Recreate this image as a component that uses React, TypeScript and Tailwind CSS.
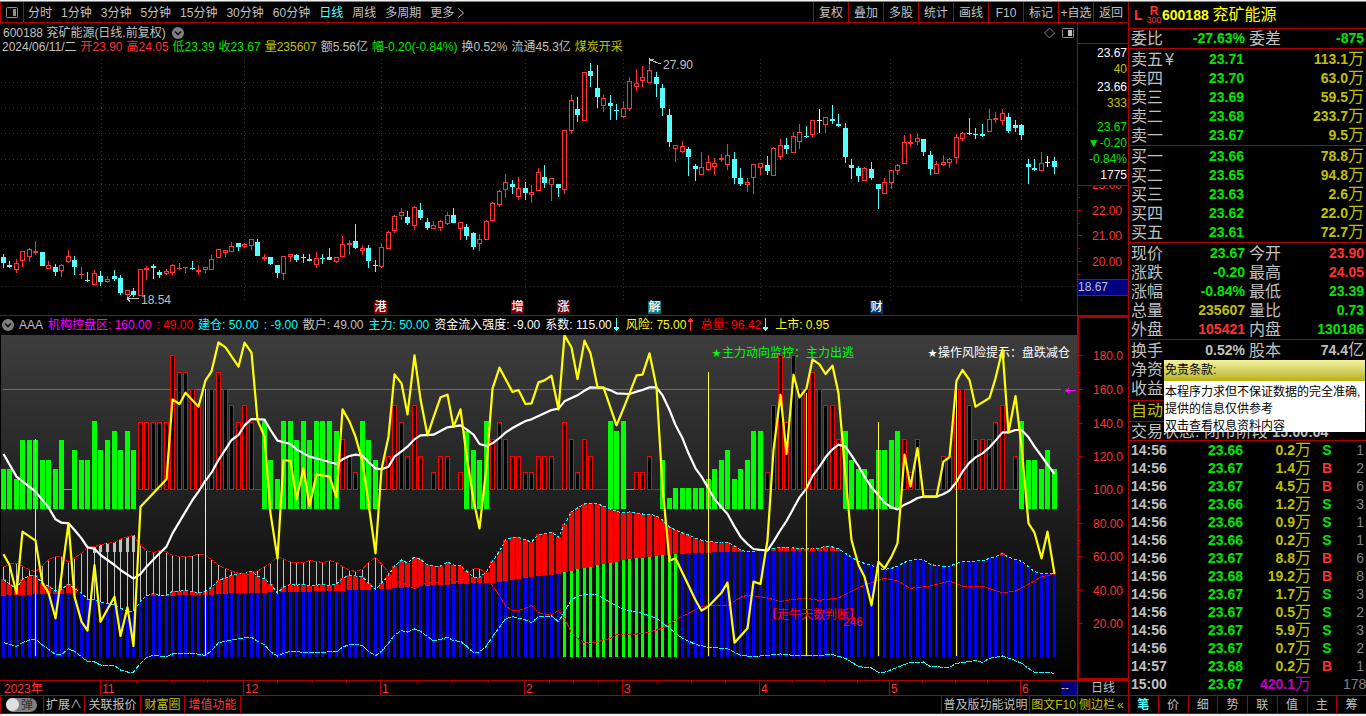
import type { ReactNode } from 'react';

type Kind = 'c' | 'r' | 'w';
type Candle = [Kind, number, number, number, number];

// kind, high, low, body top, body bottom
const CANDLES: Candle[] = [
  ['c', 254, 268, 257, 263], ['c', 261, 268, 265, 267], ['r', 259, 273, 263, 270], ['r', 251, 267, 251, 261],
  ['r', 248, 262, 249, 257], ['r', 241, 255, 251, 253], ['c', 252, 266, 252, 266], ['r', 261, 269, 265, 269],
  ['c', 264, 276, 267, 272], ['r', 264, 277, 265, 271], ['r', 250, 263, 256, 262], ['c', 256, 275, 260, 267],
  ['r', 267, 279, 274, 275], ['c', 272, 282, 280, 281], ['r', 270, 285, 273, 285], ['c', 271, 286, 276, 282],
  ['r', 276, 283, 279, 282], ['c', 270, 281, 276, 279], ['c', 275, 295, 278, 293], ['r', 290, 297, 290, 295],
  ['c', 288, 297, 291, 295], ['r', 269, 296, 269, 296], ['r', 266, 280, 268, 270], ['c', 264, 279, 266, 268],
  ['c', 270, 278, 272, 275], ['r', 269, 275, 271, 274], ['r', 264, 275, 265, 273], ['r', 263, 270, 268, 269],
  ['r', 267, 273, 267, 268], ['c', 261, 270, 268, 269], ['r', 265, 275, 270, 272], ['r', 267, 273, 267, 270],
  ['r', 255, 270, 259, 270], ['r', 249, 258, 249, 258], ['r', 250, 257, 250, 253], ['r', 242, 252, 246, 252],
  ['c', 243, 251, 243, 247], ['r', 243, 248, 244, 247], ['r', 239, 250, 239, 246], ['c', 239, 256, 242, 256],
  ['r', 254, 261, 257, 259], ['c', 257, 265, 257, 264], ['c', 265, 278, 265, 273], ['r', 256, 280, 256, 274],
  ['r', 254, 262, 254, 257], ['c', 254, 262, 255, 260], ['c', 254, 263, 257, 258], ['c', 254, 261, 259, 261],
  ['r', 252, 268, 258, 265], ['c', 254, 264, 258, 259], ['c', 248, 260, 257, 260], ['r', 257, 263, 257, 262],
  ['r', 236, 257, 244, 257], ['r', 240, 255, 243, 245], ['c', 224, 249, 241, 248], ['r', 245, 255, 248, 251],
  ['c', 245, 268, 248, 261], ['c', 260, 272, 265, 266], ['r', 243, 268, 247, 267], ['r', 231, 249, 232, 249],
  ['r', 215, 233, 216, 231], ['r', 208, 220, 212, 216], ['c', 211, 225, 217, 223], ['r', 206, 230, 207, 226],
  ['c', 203, 220, 210, 218], ['c', 218, 230, 222, 228], ['r', 221, 229, 225, 229], ['r', 220, 231, 221, 228],
  ['r', 212, 225, 215, 224], ['c', 208, 223, 215, 223], ['r', 222, 240, 222, 229], ['c', 224, 240, 227, 236],
  ['c', 232, 250, 233, 247], ['r', 234, 251, 239, 244], ['r', 220, 240, 221, 240], ['r', 202, 221, 203, 221],
  ['r', 190, 207, 191, 205], ['r', 174, 198, 182, 190], ['c', 180, 194, 184, 187], ['r', 177, 200, 188, 197],
  ['c', 182, 200, 188, 193], ['r', 185, 203, 192, 195], ['r', 168, 191, 172, 191], ['c', 165, 188, 177, 183],
  ['r', 178, 201, 178, 185], ['c', 184, 197, 184, 188], ['r', 130, 194, 130, 190], ['r', 95, 134, 100, 131],
  ['c', 97, 122, 109, 115], ['r', 72, 121, 72, 121], ['c', 63, 87, 71, 76], ['c', 65, 108, 88, 97],
  ['r', 95, 112, 98, 106], ['c', 95, 120, 103, 106], ['c', 104, 120, 110, 111], ['r', 101, 118, 108, 117],
  ['r', 77, 111, 81, 109], ['r', 69, 91, 83, 87], ['r', 66, 87, 77, 81], ['r', 62, 83, 70, 83],
  ['c', 72, 97, 77, 84], ['c', 84, 116, 88, 108], ['c', 109, 147, 115, 142], ['r', 145, 162, 145, 149],
  ['r', 141, 153, 146, 152], ['c', 147, 176, 149, 157], ['c', 164, 181, 166, 169], ['r', 152, 175, 167, 175],
  ['r', 155, 171, 162, 170], ['r', 158, 175, 163, 167], ['r', 154, 162, 158, 160], ['r', 144, 170, 155, 165],
  ['c', 152, 184, 159, 178], ['c', 168, 186, 178, 184], ['r', 178, 192, 182, 185], ['r', 164, 194, 164, 178],
  ['r', 163, 175, 163, 168], ['c', 156, 175, 165, 171], ['r', 147, 176, 148, 176], ['r', 139, 160, 145, 157],
  ['c', 138, 154, 145, 149], ['r', 132, 153, 136, 153], ['r', 124, 149, 132, 142], ['c', 126, 138, 136, 137],
  ['r', 120, 138, 120, 135], ['w', 109, 133, 120, 121], ['r', 117, 133, 117, 125], ['c', 105, 124, 119, 121],
  ['c', 114, 127, 124, 126], ['c', 123, 163, 128, 157], ['c', 159, 179, 165, 168], ['c', 166, 182, 168, 176],
  ['r', 167, 181, 168, 181], ['c', 162, 180, 169, 178], ['c', 184, 209, 184, 189], ['r', 178, 194, 182, 194],
  ['r', 170, 189, 170, 183], ['r', 164, 175, 165, 171], ['r', 135, 164, 142, 164], ['r', 134, 147, 142, 144],
  ['r', 133, 145, 138, 142], ['c', 139, 156, 139, 152], ['c', 151, 175, 155, 169], ['r', 161, 174, 164, 174],
  ['r', 155, 166, 162, 165], ['r', 158, 168, 159, 163], ['r', 134, 164, 137, 158], ['r', 132, 141, 133, 139],
  ['c', 118, 135, 133, 134], ['c', 128, 139, 134, 135], ['c', 124, 137, 134, 136], ['r', 109, 132, 119, 132],
  ['r', 112, 123, 118, 120], ['r', 109, 125, 113, 121], ['c', 113, 133, 117, 131], ['c', 120, 132, 125, 128],
  ['c', 124, 140, 125, 135], ['c', 159, 184, 164, 167], ['c', 159, 171, 168, 170], ['r', 152, 171, 163, 171],
  ['w', 156, 167, 162, 163], ['c', 157, 174, 161, 167],
];

// One letter per day: capitals are green bars, small letters hollow red ones
const BARS =
  'FFGCCCEEFC,DEEADCBDBD' + 'eeeeeabbcdccbcdede.' + 'AEGAACACAAAB' + 'fghACE,' + 'gdegdg.hgg.h' +
  'BDEAfefgghhggg.efhfg..' + 'ABA,hhg.EIHHHHH' + 'GFEDGFEBB' + 'hdaeaccbcddf' + 'BEFFGDDCB' + 'fhf...ggccdfffed.gAEEFDF';

const BAR_TOP: Record<string, number> = {
  A: 86, B: 96, C: 105, D: 115, E: 125, F: 134, G: 144, H: 153, I: 163,
  a: 20, b: 37, c: 54, d: 70, e: 87, f: 104, g: 121, h: 137,
};

// Series are "day:value" pairs, value in thirds of a pixel below the panel top; gaps are linear
const CONTROL = '0:857 6:852 12:849 22:857 30:856 35:850 42:847 51:843 54:840 59:837 63:830 65:827 70:822 75:818 80:804 85:791 90:770 95:751 100:737 104:731 107:729 110:726 116:724 128:722 153:738 161:760';
const TREND = '0:808 1:823 2:835 3:808 4:798 5:796 6:820 7:828 8:843 9:838 10:822 11:835 12:849 13:868 14:868 15:876 16:880 17:884 18:894 19:904 20:904 21:873 22:858 23:850 24:857 25:856 26:844 27:844 28:841 29:844 30:849 31:844 32:832 33:811 34:804 35:796 36:792 37:790 38:784 39:798 40:807 41:822 42:849 43:832 44:823 45:826 46:822 47:828 48:826 49:823 50:826 51:822 52:805 53:796 54:798 55:801 56:820 57:839 58:820 59:796 60:768 61:750 62:759 63:742 64:748 65:765 66:768 67:768 68:756 69:765 70:768 71:783 72:802 73:802 74:786 75:754 76:724 77:690 78:682 79:682 80:690 81:696 82:673 83:672 84:666 85:682 86:642 87:606 88:594 89:582 90:580 91:582 92:588 93:597 94:604 95:609 96:606 97:609 98:612 99:612 100:618 101:630 102:651 103:660 104:669 105:675 106:684 107:691 108:694 109:697 110:696 111:696 112:708 113:720 114:726 115:724 116:721 117:722 118:715 119:711 120:711 121:714 122:714 123:717 124:714 125:714 126:709 127:711 128:717 129:730 130:742 131:754 132:760 133:766 134:776 135:778 136:775 137:769 138:757 139:751 140:748 141:750 142:763 143:767 144:769 145:769 146:760 147:755 150:752 151:745 152:740 153:730 154:742 155:748 156:754 157:770 158:785 159:790 161:790';
const RETAIL = '0:772 1:762 2:760 3:768 4:780 5:785 6:766 7:750 8:738 9:738 10:756 11:744 12:730 13:712 14:710 15:704 16:700 17:697 18:687 19:681 20:676 21:706 22:722 23:728 24:722 25:726 26:736 27:739 28:739 29:738 30:732 31:735 32:748 33:766 34:775 35:783 36:790 37:790 38:796 39:784 40:770 41:760 42:740 43:747 44:756 45:757 46:757 47:752 48:754 49:758 50:752 51:757 52:770 53:781 54:784 55:778 56:757 57:742 58:762 59:787 60:812 62:825 63:836 64:826 65:816 67:816 68:806 70:818 71:795 72:776 73:776 74:790 75:828 76:856 77:888 78:902 79:902 80:894 81:886 82:908 83:912 84:914 85:902 86:925 87:968 88:985 89:998 90:1000 91:996 92:990 93:985 94:974 95:972 97:972 99:966 101:955 103:930 105:910 107:890 108:887 111:887 113:862 114:855 116:860 117:864 119:874 121:868 123:865 125:871 128:864 130:844 132:825 135:805 137:812 139:835 142:828 145:813 147:828 150:828 152:842 153:848 155:843 157:823 159:800 161:792';
const BUILD = '0:998 2:1009 3:998 4:990 5:987 6:1005 8:1033 9:1034 10:1016 11:1024 12:1040 13:1055 14:1056 15:1065 17:1067 18:1080 19:1086 20:1086 21:1060 22:1042 23:1036 25:1040 26:1032 29:1030 31:1036 32:1022 33:998 35:990 37:984 38:982 39:994 40:1004 41:1025 42:1038 43:1030 44:1024 47:1028 51:1025 52:1012 53:1003 54:1003 55:1007 56:1024 57:1037 58:1024 59:1000 60:975 61:962 62:966 63:957 64:964 65:980 66:992 67:988 68:982 69:992 70:994 71:1008 72:1028 73:1026 74:1008 75:980 76:952 77:926 78:920 80:930 81:938 82:920 83:920 84:918 85:935 86:905 87:868 88:860 89:852 91:855 93:878 95:898 98:910 100:925 102:955 104:985 106:1003 108:1012 111:1016 113:1036 115:1040 119:1032 122:1038 127:1034 129:1045 131:1070 133:1074 134:1087 135:1087 137:1072 139:1057 141:1056 142:1070 145:1072 146:1060 149:1052 150:1057 151:1045 153:1038 155:1052 156:1060 157:1075 158:1087 160:1087 161:1090';
const MEAN = '0:432 2:500 5:545 7:592 8:628 9:638 10:640 11:660 12:685 13:712 14:716 15:735 17:765 18:780 20:806 21:792 22:770 24:730 25:710 26:670 28:605 29:570 30:545 31:512 32:488 33:450 34:418 35:390 36:375 37:346 38:327 40:329 41:360 42:392 44:402 45:418 47:440 49:450 51:462 52:448 53:438 54:434 55:437 56:456 57:475 58:478 59:470 60:440 61:424 62:410 63:388 64:376 66:374 68:352 70:346 71:358 72:374 73:402 74:408 75:400 76:384 77:368 78:354 80:333 81:328 82:318 84:300 85:296 86:274 87:264 88:256 89:242 90:232 92:234 93:241 94:250 96:252 97:245 98:240 99:232 100:232 101:256 102:300 103:345 104:385 105:430 106:475 107:500 108:535 109:568 110:592 111:612 112:650 113:680 114:702 115:717 117:722 118:695 119:660 120:633 121:595 122:562 123:535 124:498 125:470 126:442 127:418 128:404 129:410 130:436 131:468 132:500 133:532 134:556 135:578 136:592 137:598 138:584 139:576 140:564 141:560 143:560 144:552 145:542 146:516 147:485 148:458 149:442 150:430 151:412 152:392 153:367 154:367 155:360 156:360 157:382 158:410 159:438 160:464 161:492';
const RISK = '0:733 1:765 2:850 3:665 5:692 6:820 7:848 8:925 9:795 10:640 11:860 12:935 13:962 14:765 15:935 17:860 18:978 19:892 20:1008 21:590 25:508 26:268 27:282 28:248 30:290 31:211 32:184 33:97 34:112 36:170 37:98 38:128 39:330 40:380 41:610 42:745 43:450 44:453 45:568 46:475 47:588 48:493 50:500 51:562 52:298 53:335 54:380 55:455 56:580 57:730 58:478 59:380 60:193 61:220 62:313 63:136 64:268 65:376 66:322 67:262 68:254 69:350 70:298 71:435 72:570 73:655 74:470 75:236 76:173 78:246 79:240 80:282 81:280 82:217 83:211 84:197 85:298 86:76 87:112 88:207 89:92 90:130 91:231 92:232 94:346 95:295 96:250 97:196 98:194 99:130 100:232 101:530 102:752 103:745 106:870 107:902 108:889 110:848 111:818 112:998 114:955 115:815 116:822 117:690 118:420 119:254 120:432 121:194 122:262 123:235 124:148 125:163 126:192 127:167 128:250 129:500 130:690 131:765 132:800 133:886 134:755 135:775 136:740 137:700 138:434 139:530 140:414 141:560 143:560 144:454 145:442 146:212 147:180 148:210 149:290 151:264 152:205 153:118 154:367 155:258 156:410 157:640 158:668 159:745 160:665 161:792';

const SIGNALS = [[5, 387], [31, 238], [108, 186], [123, 250], [134, 336], [146, 212]];

const DAYS = 162;
const COLORS = { c: '#54ffff', r: '#ff3232', w: '#ffffff' };

const dayX = (i: number) => Math.floor(3 + 6.53 * i);
const panelY = (v: number) => Math.round(v / 3) - 25;

function parse(series: string) {
  return series.split(' ').map((p) => p.split(':').map(Number));
}

function fill(series: string) {
  const points = parse(series);
  const out: number[] = [];
  for (let k = 0; k < points.length - 1; k++) {
    const [a, va] = points[k];
    const [b, vb] = points[k + 1];
    for (let i = a; i < b; i++) out[i] = va + ((vb - va) * (i - a)) / (b - a);
  }
  const last = points[points.length - 1];
  out[last[0]] = last[1];
  return out;
}

function toLine(series: string) {
  return parse(series).map(([i, v]) => `${dayX(i) + 0.5},${v / 3 - 25}`).join(' ');
}

const control = fill(CONTROL);
const trend = fill(TREND);
const retail = fill(RETAIL);

function CandleChart() {
  return (
    <svg className="block h-[292px] w-full" shapeRendering="crispEdges">
      <g transform="translate(0 -23)">
        {[82, 108, 133, 159, 184, 210, 235, 261, 286].map((y) => (
          <line key={y} x1="1" x2="1075" y1={y + 0.5} y2={y + 0.5} stroke="#a00000" strokeDasharray="1 3" />
        ))}
        {[101, 244, 381, 525, 623, 760, 890, 1021].map((x) => (
          <line key={x} x1={x + 0.5} x2={x + 0.5} y1="59" y2="300" stroke="#a00000" strokeDasharray="1 3" />
        ))}
        {CANDLES.map(([kind, hi, lo, top, bottom], i) => {
          const x = dayX(i);
          const h = Math.max(bottom - top, 1);
          const hollow = kind === 'r' && h > 2;
          return (
            <g key={i} fill={COLORS[kind]}>
              <rect x={x} y={hi} width="1" height={lo - hi} />
              {hollow ? (
                <rect x={x - 1.5} y={top + 0.5} width="4" height={h - 1} fill="#000" stroke={COLORS.r} />
              ) : (
                <rect x={x - 2} y={top} width="5" height={h} />
              )}
            </g>
          );
        })}
        <path d="M127 298.5h12M127 298.5l4-3M127 298.5l3 3" stroke="#c0c0c0" fill="none" />
        <path d="M650 60l11 4M649.5 58v6M650 59.5h4" stroke="#c0c0c0" fill="none" />
        <g fill="#c0c0c0" fontSize="12">
          <text x="141" y="304">18.54</text>
          <text x="663" y="69">27.90</text>
        </g>
      </g>
    </svg>
  );
}

function IndicatorChart() {
  return (
    <svg className="block h-[345px] w-full" shapeRendering="crispEdges">
      <defs>
        <linearGradient id="panel" x1="0" y1="0" x2="0" y2="1">
          <stop offset="0" stopColor="#3d3d3d" />
          <stop offset="1" stopColor="#000" />
        </linearGradient>
      </defs>
      <rect x="1" width="1076" height="345" fill="url(#panel)" />
      <line x1="3" x2="1061" y1="54.5" y2="54.5" stroke="#ff00ff" />
      <path d="M1066 55.5h10M1069 53l-3 2.5l3 2.5" stroke="#ff00ff" fill="none" />

      <g fill="#00ff00" fontSize="12">
        <text x="712" y="21" fontSize="9">★</text>
        <text x="722" y="22">主力动向监控：</text>
        <text x="806" y="22">主力出逃</text>
      </g>
      <g fill="#ffffff" fontSize="12">
        <text x="928" y="21" fontSize="9">★</text>
        <text x="938" y="22">操作风险提示：</text>
        <text x="1022" y="22">盘跌减仓</text>
      </g>

      {Array.from({ length: DAYS }, (_, i) => {
        const x = dayX(i);
        const code = BARS[i];
        const top = BAR_TOP[code];
        if (top === undefined) {
          return <rect key={i} x={x - 4} y="154" width="9" height="1" fill={code === ',' ? '#00ff00' : '#ff0000'} />;
        }
        return code < 'a' ? (
          <rect key={i} x={x - 2} y={top} width="5" height={174 - top} fill="#00ff00" />
        ) : (
          <rect key={i} x={x - 1.5} y={top + 0.5} width="4" height={154 - top} fill="#000" stroke="#ff0000" />
        );
      })}

      {control.map((c, i) => {
        const x = dayX(i);
        const base = panelY(Math.max(c, trend[i]));
        const low = panelY(trend[i]);
        const high = panelY(retail[i]);
        const wide = i > 13 && i < 21;
        return (
          <g key={i}>
            {retail[i] < trend[i] && i < 75 && <rect x={x} y={high} width="1" height={low - high} fill="#c0c0c0" />}
            {wide && <rect x={x - 1} y={high} width="3" height={Math.max(217 - high, 6)} fill="#c0c0c0" />}
            <rect x={x - 1} y={base} width="3" height={322 - base} fill={i > 85 && i < 104 ? '#00ff00' : '#0000ff'} />
            {trend[i] < c && <rect x={x - 2} y={low} width="5" height={base - low} fill="#ff0000" />}
          </g>
        );
      })}

      <g fill="none">
        <polyline points={toLine(TREND)} stroke="#00ffff" strokeDasharray="3 2" />
        <polyline points={toLine(RETAIL)} stroke="#ff0000" strokeDasharray="5 1" />
        <polyline points={toLine(BUILD)} stroke="#00ffff" strokeDasharray="5 1" />
        <g strokeWidth="2.2" strokeLinejoin="round" shapeRendering="auto">
          <polyline points={toLine(MEAN)} stroke="#ffffff" />
          <polyline points={toLine(RISK)} stroke="#ffff00" />
        </g>
      </g>
      {SIGNALS.map(([i, v]) => (
        <rect key={i} x={dayX(i)} y={panelY(v)} width="1" height={321 - panelY(v)} fill="#ffff40" />
      ))}
      <g fill="#ff0000" fontSize="12">
        <text x="765" y="284">【走牛天数判断】</text>
        <text x="843" y="291">246</text>
      </g>
    </svg>
  );
}

function DateAxis() {
  const months: [number, string][] = [
    [100, '11'], [243, '12'], [380, '1'], [524, '2'], [622, '3'], [759, '4'], [889, '5'], [1020, '6'],
  ];
  const weeks = [136, 172, 207, 277, 312, 346, 416, 452, 488, 549, 573, 598, 656, 691, 725, 792, 824, 857, 922, 955, 987];
  return (
    <svg className="block h-[14px] w-full" shapeRendering="crispEdges" fill="#ff3232" fontSize="12">
      <text x="4" y="12">2023年</text>
      {months.map(([x, label]) => (
        <g key={x}>
          <rect x={x} width="1" height="14" fill="#b00000" />
          <text x={x + 2} y="12">{label}</text>
        </g>
      ))}
      {weeks.map((x) => (
        <rect key={x} x={x} width="1" height="2" fill="#b00000" />
      ))}
    </svg>
  );
}

function Scale({ labels, minor, className }: { labels: [number, string][]; minor: number[]; className: string }) {
  return (
    <svg className={className} shapeRendering="crispEdges" fill="#ff3232" fontSize="12">
      {labels.map(([y, label]) => (
        <g key={label}>
          <rect y={y} width="4" height="1" fill="#b00000" />
          <text x="44" y={y + 5} textAnchor="end">{label}</text>
        </g>
      ))}
      {minor.map((y) => (
        <rect key={y} y={y} width="2" height="1" fill="#b00000" />
      ))}
    </svg>
  );
}

function Chevron() {
  return (
    <svg viewBox="0 0 12 12" className="size-3 shrink-0">
      <circle cx="6" cy="6" r="6" fill="#808080" />
      <path d="M3 4.5l3 3l3-3" stroke="#111" strokeWidth="1.6" fill="none" />
    </svg>
  );
}

function Arrow({ up }: { up?: boolean }) {
  return (
    <svg
      viewBox="0 0 5 13"
      className="mx-0.5 h-[13px] w-[5px] shrink-0"
      shapeRendering="crispEdges"
      fill={up ? '#ff3232' : '#54ffff'}
    >
      <path d={up ? 'M2 0h1v13h-1zM1 1h3v1h1v2h-5v-2h1z' : 'M2 0h1v13h-1zM0 9h5v2h-1v1h-3v-1h-1z'} />
    </svg>
  );
}

const PERIODS = ['分时', '1分钟', '3分钟', '5分钟', '15分钟', '30分钟', '60分钟', '日线', '周线', '多周期'];
const TOOLS = ['复权', '叠加', '多股', '统计', '画线', 'F10', '标记', '+自选', '返回'];

function TopBar() {
  return (
    <div className="flex h-[21px] items-stretch border-b border-[#b00000]">
      <button aria-label="布局" className="flex w-6 items-center justify-center border-x border-[#b00000]">
        <svg viewBox="0 0 12 11" className="h-[11px] w-3">
          <rect x="0.5" y="0.5" width="11" height="10" rx="1" fill="none" stroke="#909090" />
          <rect x="7" y="2" width="3" height="7" fill="#909090" />
        </svg>
      </button>
      <nav className="flex items-center gap-[9px] pt-px pl-1">
        {PERIODS.map((p) => (
          <button key={p} className={p === '日线' ? 'text-[#54ffff]' : ''}>{p}</button>
        ))}
        <button className="flex items-center gap-1">
          更多
          <svg viewBox="0 0 6 10" className="h-[10px] w-[6px]">
            <path d="M0.5 0.5l5 4.5l-5 4.5" fill="none" stroke="#c0c0c0" />
          </svg>
        </button>
      </nav>
      <div className="ml-auto flex">
        {TOOLS.map((t) => (
          <button key={t} className="w-[35px] border-l border-[#b00000] pt-px whitespace-nowrap">{t}</button>
        ))}
      </div>
    </div>
  );
}

const QUOTE_LINE: [string, string][] = [
  ['2024/06/11/二', 'text-[#c0c0c0]'],
  ['开23.90', 'text-[#ff3232]'],
  ['高24.05', 'text-[#ff3232]'],
  ['低23.39', 'text-[#00e600]'],
  ['收23.67', 'text-[#00e600]'],
  ['量235607', 'text-[#c0c000]'],
  ['额5.56亿', 'text-[#c0c0c0]'],
  ['幅-0.20(-0.84%)', 'text-[#00e600]'],
  ['换0.52%', 'text-[#c0c0c0]'],
  ['流通45.3亿', 'text-[#c0c0c0]'],
  ['煤炭开采', 'text-[#c0c000]'],
];

function PricePanel() {
  return (
    <section className="flex h-[293px] border-b border-[#b00000]">
      <div className="relative min-w-0 flex-1 overflow-hidden">
        <CandleChart />
        <div className="absolute inset-x-0 top-0.5">
          <div className="flex h-[15px] items-center gap-1.5 pl-[3px]">
            600188 兖矿能源(日线.前复权)
            <Chevron />
            <svg viewBox="0 0 30 12" className="mr-[3px] ml-auto h-3 w-[30px]" fill="none">
              <path d="M5.500 1l5 5l-5 5l-5-5z" stroke="#808080" />
              <rect x="18.500" y="1.500" width="11" height="9" rx="1" stroke="#909090" />
              <rect x="24" y="3" width="4" height="6" fill="#c0c0c0" />
            </svg>
          </div>
          <div className="flex h-[14px] items-center gap-1 pl-0.5 whitespace-nowrap">
            {QUOTE_LINE.map(([t, c]) => (
              <span key={t} className={c}>{t}</span>
            ))}
          </div>
        </div>
        <Marker className="left-[374px] bg-[#800000]">港</Marker>
        <Marker className="left-[511px] bg-[#800000]">增</Marker>
        <Marker className="left-[557px] bg-[#800000]">涨</Marker>
        <Marker className="left-[648px] bg-[#008080]">解</Marker>
        <Marker className="left-[870px] bg-[#003366]">财</Marker>
      </div>
      <div className="flex w-[51px] flex-col border-l border-[#b00000]">
        <div className="mt-5 flex h-[143px] flex-col border-y border-[#b00000] pt-px pr-px text-right leading-4">
          <span className="text-white">23.67</span>
          <span className="text-[#c0c000]">40</span>
          <span className="mt-0.5 text-white">23.66</span>
          <span className="text-[#c0c000]">333</span>
          <span className="mt-2 text-[#00e600]">23.67</span>
          <span className="text-[#00e600]">▼-0.20</span>
          <span className="text-[#00e600]">-0.84%</span>
          <span className="text-white">1775</span>
        </div>
        <Scale
          className="block h-[93px] w-full"
          labels={[[-2, '23.00'], [24, '22.00'], [49, '21.00'], [75, '20.00']]}
          minor={[11, 37, 62, 88]}
        />
        <div className="h-[17px] border-y border-[#b00000] bg-[#000080] leading-[14px]">18.67</div>
      </div>
    </section>
  );
}

function Marker({ className, children }: { className: string; children: ReactNode }) {
  return (
    <span className={`absolute bottom-px size-[13px] text-center leading-[13px] font-medium text-white ${className}`}>
      {children}
    </span>
  );
}

function IndicatorPanel() {
  return (
    <section className="flex">
      <div className="min-w-0 flex-1 overflow-hidden">
        <div className="flex h-[19px] items-center gap-[5px] pb-0.5 pl-0.5 whitespace-nowrap">
          <Chevron />
          <span>AAA</span>
          <span className="text-[#ff00ff]">机构控盘区: 160.00</span>
          <span className="text-[#ff0000]">: 49.00</span>
          <span className="text-[#00ffff]">建仓: 50.00</span>
          <span className="text-[#00ffff]">: -9.00</span>
          <span>散户: 49.00</span>
          <span className="text-[#00ffff]">主力: 50.00</span>
          <span className="text-white">资金流入强度: -9.00</span>
          <span className="flex items-center text-white">系数: 115.00<Arrow /></span>
          <span className="flex items-center text-[#ffff00]">风险: 75.00<Arrow up /></span>
          <span className="flex items-center text-[#ff0000]">总量: 96.42<Arrow /></span>
          <span className="text-[#ffff00]">上市: 0.95</span>
        </div>
        <IndicatorChart />
      </div>
      <div className="w-[51px] border-2 border-r-0 border-[#b00000]">
        <Scale
          className="block h-[360px] w-full"
          labels={[
            [37, '180.0'], [71, '160.0'], [105, '140.0'], [138, '120.0'], [171, '100.0'],
            [205, '80.00'], [238, '60.00'], [272, '40.00'], [305, '20.00'],
          ]}
          minor={[54, 88, 121, 155, 188, 222, 255, 289]}
        />
      </div>
    </section>
  );
}

function BottomBar() {
  return (
    <footer className="flex h-[19px] items-stretch border-y border-[#b00000] leading-[19px] whitespace-nowrap">
      <div className="flex w-[44px] items-center border-x border-[#b00000] pl-[5px]">
        <label className="flex h-[14px] w-[31px] items-center rounded-full bg-[#808080] text-[#303030]">
          <input type="checkbox" className="size-[13px] appearance-none rounded-full bg-[#e0e0e0]" />
          <span className="pl-0.5 leading-none">弹</span>
        </label>
      </div>
      <button className="w-[41px] border-r border-[#b00000]">扩展∧</button>
      <button className="w-[56px] border-r border-[#b00000]">关联报价</button>
      <button className="w-[44px] border-r border-[#b00000] text-[#c0c000]">财富圈</button>
      <button className="w-[56px] border-r border-[#b00000] text-[#ff3232]">增值功能</button>
      <button className="ml-auto w-[88px] border-l border-[#b00000]">普及版功能说明</button>
      <button className="w-[48px] border-l border-[#b00000] text-[#c0c000]">图文F10</button>
      <button className="w-[51px] overflow-hidden border-l border-[#b00000] pl-px text-left text-[#c0c000]">
        侧边栏<span className="pl-0.5">«</span>
      </button>
    </footer>
  );
}

const GREEN = 'text-[#00e600]';
const RED = 'text-[#ff3232]';
const YELLOW = 'text-[#c0c000]';

const ASKS = [['卖五', '23.71', '113.1'], ['卖四', '23.70', '63.0'], ['卖三', '23.69', '59.5'], ['卖二', '23.68', '233.7'], ['卖一', '23.67', '9.5']];
const BIDS = [['买一', '23.66', '78.8'], ['买二', '23.65', '94.8'], ['买三', '23.63', '2.6'], ['买四', '23.62', '22.0'], ['买五', '23.61', '72.7']];

function Book({ rows }: { rows: string[][] }) {
  return (
    <div className="border-b border-[#b00000] pt-px">
      <table className="w-full table-fixed">
        <tbody>
          {rows.map(([name, price, vol]) => (
            <tr key={name} className="h-[19px] leading-[19px] font-bold">
              <th className="w-[60px] p-0 pl-0.5 text-left text-base leading-[19px] font-normal whitespace-nowrap">
                {name}
                {name === '卖五' && <span className="pl-0.5">¥</span>}
              </th>
              <td className={`w-[55px] p-0 text-right ${GREEN}`}>{price}</td>
              <td className={`p-0 pr-0.5 text-right ${YELLOW}`}>
                {vol}<Unit>万</Unit>
              </td>
            </tr>
          ))}
        </tbody>
      </table>
    </div>
  );
}

function Unit({ children }: { children: ReactNode }) {
  return <span className="text-base leading-none font-normal">{children}</span>;
}

interface Pair {
  a: string;
  av: string;
  ac: string;
  b?: string;
  bv?: ReactNode;
  bc?: string;
}

function Pairs({ rows, className }: { rows: Pair[]; className: string }) {
  return (
    <div className={`border-b border-[#b00000] ${className}`}>
      <table className="w-full table-fixed">
        <tbody>
          {rows.map((r) => (
            <tr key={r.a} className="h-[19px] leading-[19px] font-bold">
              <th className="w-[36px] p-0 pl-0.5 text-left text-base leading-[19px] font-normal">{r.a}</th>
              <td className={`w-[80px] p-0 text-right ${r.ac}`}>{r.av}</td>
              <th className="w-[40px] p-0 pl-1 text-left text-base leading-[19px] font-normal">{r.b}</th>
              <td className={`p-0 pr-0.5 text-right ${r.bc ?? ''}`}>{r.bv}</td>
            </tr>
          ))}
        </tbody>
      </table>
    </div>
  );
}

const QUOTES: Pair[] = [
  { a: '现价', av: '23.67', ac: GREEN, b: '今开', bv: '23.90', bc: RED },
  { a: '涨跌', av: '-0.20', ac: GREEN, b: '最高', bv: '24.05', bc: RED },
  { a: '涨幅', av: '-0.84%', ac: GREEN, b: '最低', bv: '23.39', bc: GREEN },
  { a: '总量', av: '235607', ac: YELLOW, b: '量比', bv: '0.73', bc: GREEN },
  { a: '外盘', av: '105421', ac: RED, b: '内盘', bv: '130186', bc: GREEN },
];

const TICKS = [
  ['14:56', '23.66', '0.2', 'S', '1'],
  ['14:56', '23.67', '1.4', 'B', '2'],
  ['14:56', '23.67', '4.5', 'B', '6'],
  ['14:56', '23.66', '1.2', 'S', '3'],
  ['14:56', '23.66', '0.9', 'S', '1'],
  ['14:56', '23.66', '0.2', 'S', '1'],
  ['14:56', '23.67', '8.8', 'B', '6'],
  ['14:56', '23.68', '19.2', 'B', '8'],
  ['14:56', '23.67', '1.7', 'S', '3'],
  ['14:56', '23.67', '0.5', 'S', '2'],
  ['14:56', '23.67', '5.9', 'S', '3'],
  ['14:56', '23.67', '0.7', 'S', '2'],
  ['14:57', '23.68', '0.2', 'B', '1'],
  ['15:00', '23.67', '420.1', '', '178'],
];

function SidePanel() {
  return (
    <aside className="relative flex w-[238px] shrink-0 flex-col border-l border-[#b00000] text-sm">
      <header className="flex h-[27px] items-center border-b border-[#b00000] pl-[5px] font-bold">
        <span className={`w-[12px] ${RED}`}>L</span>
        <span className={`flex w-4 flex-col items-center text-xs leading-[10px] ${RED}`}>
          R<span className="text-[9px] leading-[9px] font-normal">300</span>
        </span>
        <h1 className="text-[#ffff00]">
          600188 <span className="text-base leading-none font-normal">兖矿能源</span>
        </h1>
      </header>
      <Pairs className="" rows={[{ a: '委比', av: '-27.63%', ac: GREEN, b: '委差', bv: '-875', bc: GREEN }]} />
      <Book rows={ASKS} />
      <Book rows={BIDS} />
      <Pairs className="pt-px" rows={QUOTES} />
      <Pairs
        className="h-[61px] pt-px"
        rows={[
          { a: '换手', av: '0.52%', ac: '', b: '股本', bv: <>74.4<Unit>亿</Unit></> },
          { a: '净资', av: '', ac: '' },
          { a: '收益', av: '', ac: '' },
        ]}
      />
      <div className={`h-[21px] border-b border-[#b00000] pl-0.5 text-base leading-5 ${YELLOW}`}>自动</div>
      <div className="h-[19px] overflow-hidden border-b border-[#b00000] pl-0.5 text-base leading-[17px] whitespace-nowrap">
        交易状态: 闭市阶段 <span className="text-sm font-bold">15:00:04</span>
      </div>

      <table className="w-full table-fixed">
        <tbody>
          {TICKS.map(([time, price, vol, side, n], i) => (
            <tr key={i} className="h-[18px] leading-[18px] font-bold">
              <td className="w-[40px] p-0 pl-0.5">{time}</td>
              <td className={`w-[74px] p-0 text-right ${GREEN}`}>{price}</td>
              <td className={`w-[68px] p-0 text-right ${side ? YELLOW : 'text-[#c000c0]'}`}>
                {vol}<Unit>万</Unit>
              </td>
              <td className={`w-[32px] p-0 text-center ${side === 'B' ? RED : GREEN}`}>{side}</td>
              <td className="p-0 pr-0.5 text-right font-normal text-[#808080]">{n}</td>
            </tr>
          ))}
        </tbody>
      </table>

      <nav className="mt-auto flex h-[19px] border-y border-[#b00000] text-xs leading-[19px]">
        {['笔', '价', '细', '势', '联', '值', '主', '筹'].map((t) => (
          <button
            key={t}
            className={`flex-1 border-r border-[#b00000] last:border-r-0 ${t === '笔' ? 'font-bold text-[#54ffff]' : ''}`}
          >
            {t}
          </button>
        ))}
      </nav>

      <div role="tooltip" className="absolute top-[358px] right-px w-[201px] text-xs whitespace-nowrap text-black">
        <div className="h-[21px] bg-linear-to-b from-[#f4f4a0] to-[#b8b000] pl-px leading-[21px]">免责条款:</div>
        <div className="h-[51px] overflow-hidden bg-white pt-[3px] pl-px leading-[17px]">
          本程序力求但不保证数据的完全准确,
          <br />
          提供的信息仅供参考
          <br />
          双击查看权息资料内容
        </div>
      </div>
    </aside>
  );
}

export default function App() {
  return (
    <div className="border-t border-b-2 border-[#f0f0f0] bg-black font-['Liberation_Sans','Noto_Sans_CJK_SC',sans-serif] text-xs text-[#c0c0c0]">
      <div className="flex border-t border-[#808080]">
        <main className="min-w-0 flex-1">
          <TopBar />
          <PricePanel />
          <IndicatorPanel />
          <div className="flex border-t border-[#b00000]">
            <div className="relative min-w-0 flex-1">
              <DateAxis />
              <span className="absolute top-0 right-0 w-4 bg-[#000080] leading-[14px]">--</span>
            </div>
            <div className="w-[51px] border-l border-[#b00000] text-center leading-[14px]">日线</div>
          </div>
          <BottomBar />
        </main>
        <SidePanel />
      </div>
    </div>
  );
}
